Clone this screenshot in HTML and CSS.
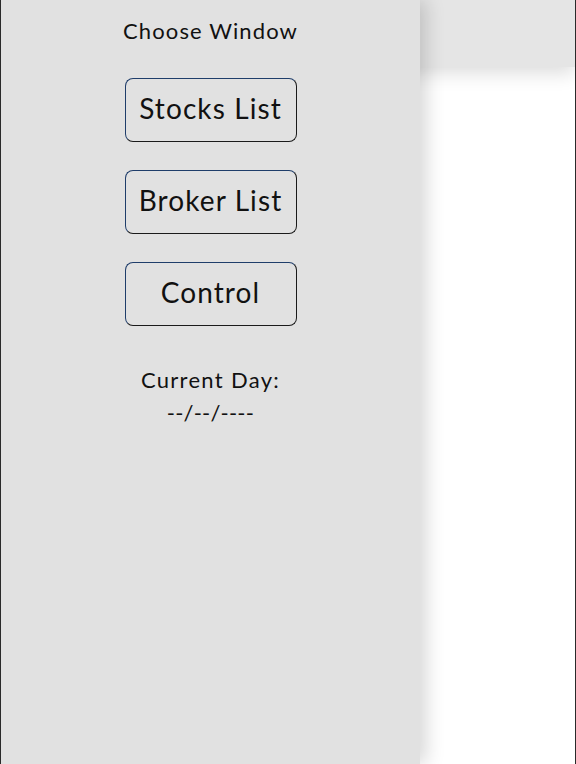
FILE: index.html
```html
<!DOCTYPE html>
<html>
<head>
<meta charset="utf-8">
<link rel="stylesheet" href="styles.css">
</head>
<body>
<div class="app">
  <header class="topbar"></header>
  <main class="content"></main>
  <aside class="sidebar">
    <div class="title">Choose Window</div>
    <nav class="menu">
      <button class="btn">Stocks List</button>
      <button class="btn">Broker List</button>
      <button class="btn">Control</button>
    </nav>
    <div class="day">
      <div>Current Day:</div>
      <div class="date">--/--/----</div>
    </div>
  </aside>
</div>
</body>
</html>
```
FILE: styles.css
```css
html, body {
  margin: 0;
  padding: 0;
  height: 100%;
  background: #ffffff;
}
.app {
  position: relative;
  height: 764px;
  box-sizing: border-box;
  border-left: 1px solid #2a2a2a;
  border-right: 1px solid #2a2a2a;
  overflow: hidden;
  font-family: "Lato", "Noto Sans", sans-serif;
  color: #111;
}
.topbar {
  position: relative;
  z-index: 1;
  height: 67px;
  background: #e5e5e5;
  box-shadow: 0 6px 18px rgba(0, 0, 0, 0.14);
}
.content {
  height: 697px;
}
.sidebar {
  position: absolute;
  z-index: 2;
  top: 0;
  left: 0;
  bottom: 0;
  width: 419px;
  background: #e1e1e1;
  box-shadow: 6px 0 18px rgba(0, 0, 0, 0.16);
  display: flex;
  flex-direction: column;
  align-items: center;
  padding-top: 16px;
  box-sizing: border-box;
}
.title {
  font-size: 22px;
  line-height: 30px;
  letter-spacing: 1.1px;
}
.menu {
  display: flex;
  flex-direction: column;
  gap: 28px;
  margin-top: 32px;
}
.btn {
  width: 172px;
  height: 64px;
  background: transparent;
  border: 1px solid;
  border-color: #1f3d6a #1a1a1a #1a1a1a #1f3d6a;
  border-radius: 8px;
  font-family: inherit;
  font-size: 28px;
  color: #111;
  padding: 0 0 4px;
  letter-spacing: 1.1px;
}
.day {
  margin-top: 37px;
  text-align: center;
  font-size: 22px;
  line-height: 33px;
  letter-spacing: 1.3px;
}
.date {
  letter-spacing: 0.2px;
}
```
